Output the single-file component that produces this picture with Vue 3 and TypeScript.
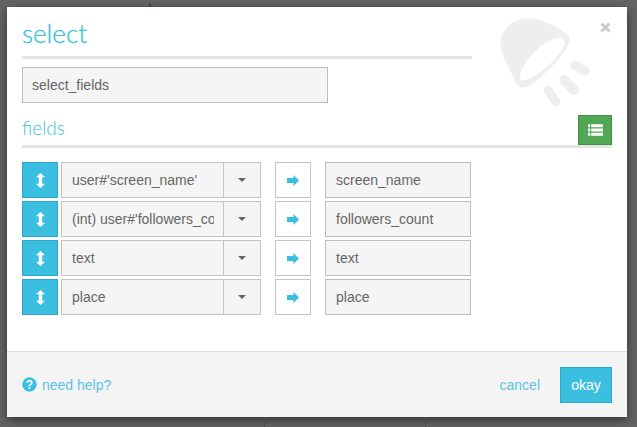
<script setup lang="ts">
interface Row { source: string; target: string }
const rows: Row[] = [
  { source: "user#'screen_name'", target: 'screen_name' },
  { source: "(int) user#'followers_count'", target: 'followers_count' },
  { source: 'text', target: 'text' },
  { source: 'place', target: 'place' },
]
</script>

<template>
  <div class="backdrop">
    <span class="bg-mark top"></span>
    <div class="modal">
      <svg class="bulb" viewBox="0 0 100 95" aria-hidden="true">
        <path class="bulb-shape" fill-rule="evenodd" d="M33 3.3C47 3.3 64 13 73 20C75 22 75 25 73 30C70 37 58 51 45 63C38 69 31 72.5 26.7 72.3C23 72 21 69 20 65C15 55 7.5 42 6.7 36.7C5.7 32 5 28 5.7 25C7 14 18 3.3 33 3.3ZM64 23C58 22.5 49 28 41.7 35C33 43 27 52 25.5 58C24.5 62 24.5 65 27 65.3C32 66 43 60 52 52C60 45 69 34 70 27C70 24 67 23 64 23Z" />
        <rect class="bulb-shape" x="74.5" y="48.8" width="21" height="9" rx="4.5" transform="rotate(29 85 53.3)" />
        <rect class="bulb-shape" x="62" y="65" width="24" height="10" rx="5" transform="rotate(45 74 70)" />
        <rect class="bulb-shape" x="46" y="76.5" width="22" height="9" rx="4.5" transform="rotate(56 57 81)" />
      </svg>
      <svg class="close" width="11" height="11" viewBox="0 0 11 11" aria-label="close">
        <path d="M1.5 1.5L9.5 9.5M9.5 1.5L1.5 9.5" stroke="#cbcbcb" stroke-width="3" fill="none" />
      </svg>

      <section class="body">
        <h2 class="title">select</h2>
        <input class="field name" value="select_fields" readonly />

        <div class="fields-head">
          <h3 class="subtitle">fields</h3>
          <button class="list-btn" aria-label="list">
            <svg width="15" height="12" viewBox="0 0 15 12">
              <path fill="#fff" d="M0 0.3h2.2v2.9H0zM3.2 0.3H15v2.9H3.2zM0 4.5h2.2v2.9H0zM3.2 4.5H15v2.9H3.2zM0 8.8h2.2v2.9H0zM3.2 8.8H15v2.9H3.2z" />
            </svg>
          </button>
        </div>

        <ul class="rows">
          <li v-for="row in rows" :key="row.target" class="row">
            <button class="handle" aria-label="move">
              <svg width="9" height="15" viewBox="0 0 9 15">
                <path fill="#fff" d="M4.5 0L9 4.2H6.2V10.8H9L4.5 15L0 10.8H2.8V4.2H0Z" />
              </svg>
            </button>
            <div class="select">
              <span class="select-text"><span class="select-clip">{{ row.source }}</span></span>
              <span class="caret"></span>
            </div>
            <button class="arrow" aria-label="maps to">
              <svg width="12" height="11" viewBox="0 0 12 11">
                <path fill="#3bbfe0" d="M6.5 0L12 5.5L6.5 11V8H0V3H6.5Z" />
              </svg>
            </button>
            <input class="field target" :value="row.target" readonly />
          </li>
        </ul>
      </section>

      <footer class="footer">
        <a class="help">
          <svg width="15" height="15" viewBox="0 0 15 15">
            <circle cx="7.5" cy="7.5" r="7.2" fill="#3bbfe0" />
            <text x="7.5" y="11.6" text-anchor="middle" class="help-q">?</text>
          </svg>
          need help?
        </a>
        <div class="actions">
          <a class="cancel">cancel</a>
          <button class="okay">okay</button>
        </div>
      </footer>
    </div>
    <span class="bg-mark bottom-a"></span>
    <span class="bg-mark bottom-b"></span>
  </div>
</template>

<style>
html, body { margin: 0; padding: 0; }
</style>

<style scoped>
* { box-sizing: border-box; }
.backdrop {
  position: relative;
  width: 637px;
  height: 427px;
  padding: 7px 10px 10px 7px;
  background: #646464;
  overflow: hidden;
  font-family: "Liberation Sans", Arial, sans-serif;
  font-size: 14px;
  color: #666;
}
.bg-mark { position: absolute; width: 1px; background: #505050; }
.bg-mark.top { left: 149px; top: 3px; width: 2px; height: 4px; background: #6a3c3c; }
.bg-mark.bottom-a { left: 264px; top: 417px; height: 10px; }
.bg-mark.bottom-b { left: 425px; top: 417px; height: 10px; }
.modal {
  position: relative;
  width: 620px;
  height: 410px;
  background: #fff;
  display: flex;
  flex-direction: column;
  box-shadow: 0 3px 9px rgba(0, 0, 0, 0.5);
}
.bulb {
  position: absolute;
  left: 488px;
  top: 8px;
  width: 100px;
  height: 95px;
}
.bulb-shape { fill: #eee; stroke: #f6f6f6; stroke-width: 0.8; stroke-dasharray: 1.2 1.2; }
.close {
  position: absolute;
  left: 593px;
  top: 15px;
}
.body {
  position: relative;
  flex: 1;
  padding: 0 15px;
}
.title {
  margin: 0;
  height: 52px;
  padding-top: 9px;
  border-bottom: 3px solid #e5e5e5;
  width: 450px;
  font-family: Lato, sans-serif;
  font-weight: 300;
  font-size: 26px;
  line-height: 34px;
  color: #3bbfe0;
  -webkit-text-stroke: 0.3px #3bbfe0;
}
.field {
  display: block;
  height: 36px;
  border: 1px solid #bdbdbd;
  background: #f5f5f5;
  padding: 0 9px;
  font: 14px "Liberation Sans", Arial, sans-serif;
  color: #666;
  outline: none;
  border-radius: 0;
}
.name { width: 306px; margin-top: 8px; }
.fields-head {
  display: flex;
  justify-content: space-between;
  align-items: flex-end;
  height: 45px;
  border-bottom: 3px solid #e5e5e5;
}
.subtitle {
  margin: 0 0 4px;
  font-family: Lato, sans-serif;
  font-weight: 300;
  font-size: 19px;
  line-height: 26px;
  color: #3bbfe0;
}
.list-btn {
  width: 34px;
  height: 30px;
  padding: 0;
  display: flex;
  align-items: center;
  justify-content: center;
  background: #52a755;
  border: 1px solid #43903f;
}
.rows {
  list-style: none;
  margin: 14px 0 0;
  padding: 0;
  display: flex;
  flex-direction: column;
  gap: 3px;
}
.row { display: flex; height: 36px; }
.handle {
  width: 36px;
  height: 36px;
  padding: 0;
  display: flex;
  align-items: center;
  justify-content: center;
  background: #3bbfe0;
  border: 1px solid #2aa8c9;
}
.select {
  width: 200px;
  margin-left: 3px;
  display: flex;
  border: 1px solid #c4c4c4;
  background: #f5f5f5;
}
.select-text {
  width: 161px;
  padding: 0 9px 0 10px;
  line-height: 34px;
  color: #666;
}
.select-clip {
  display: block;
  overflow: hidden;
  white-space: nowrap;
}
.caret {
  flex: 1;
  border-left: 1px solid #c4c4c4;
  position: relative;
}
.caret::after {
  content: "";
  position: absolute;
  left: 14px;
  top: 15px;
  border-left: 4px solid transparent;
  border-right: 4px solid transparent;
  border-top: 4px solid #666;
}
.arrow {
  width: 36px;
  height: 36px;
  margin-left: 14px;
  padding: 0;
  display: flex;
  align-items: center;
  justify-content: center;
  background: #fff;
  border: 1px solid #c4c4c4;
}
.target { width: 146px; margin-left: 14px; padding: 0 10px; }
.footer {
  height: 66px;
  display: flex;
  align-items: center;
  justify-content: space-between;
  padding: 0 15px;
  background: #f4f4f4;
  border-top: 1px solid #dedede;
}
.help {
  display: flex;
  align-items: center;
  gap: 5px;
  color: #5cc3e4;
}
.help-q { font: 700 12px "Liberation Sans", sans-serif; fill: #fff; }
.actions { display: flex; align-items: center; gap: 20px; }
.cancel { color: #5cc3e4; }
.okay {
  width: 52px;
  height: 36px;
  padding: 0;
  background: #3bbfe0;
  border: 1px solid #2aa8c9;
  color: #fff;
  font: 14px "Liberation Sans", Arial, sans-serif;
}
</style>
